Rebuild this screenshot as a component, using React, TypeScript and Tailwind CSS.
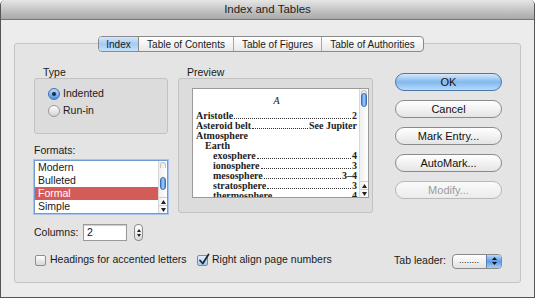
import React from "react";

const ui = "font-['Liberation_Sans',Arial,sans-serif]";

function Radio({ checked, label }: { checked?: boolean; label: string }) {
  return (
    <div className="flex items-center h-[17px]">
      <div
        className={
          checked
            ? "w-[12px] h-[12px] rounded-full border border-[#3d6fb3] bg-gradient-to-b from-[#bcd9f7] to-[#4f93e0] flex items-center justify-center"
            : "w-[12px] h-[12px] rounded-full border border-[#9a9a9a] bg-gradient-to-b from-[#ffffff] to-[#d2d2d2]"
        }
      >
        {checked && <div className="w-[4px] h-[4px] rounded-full bg-[#1b2a44]" />}
      </div>
      <span className="ml-[3px] text-[10.5px] text-[#1a1a1a]">{label}</span>
    </div>
  );
}

function Checkbox({ checked, label }: { checked?: boolean; label: string }) {
  return (
    <div className="flex items-center">
      <div
        className={
          checked
            ? "w-[11px] h-[11px] rounded-[2px] border border-[#6d8fbf] bg-gradient-to-b from-[#e4eefb] to-[#a9c8ee] relative"
            : "w-[11px] h-[11px] rounded-[2px] border border-[#8e8e8e] bg-gradient-to-b from-[#ffffff] to-[#d6d6d6]"
        }
      >
        {checked && (
          <svg className="absolute left-[0px] top-[-3px]" width="12" height="13" viewBox="0 0 12 13">
            <path d="M2 7.5 L4.8 10.5 L10.5 1.5" fill="none" stroke="#1e2a3a" strokeWidth="1.8" strokeLinecap="round" strokeLinejoin="round" />
          </svg>
        )}
      </div>
      <span className="ml-[4px] text-[10.5px] text-[#1a1a1a]">{label}</span>
    </div>
  );
}

function Button({ label, primary, disabled }: { label: string; primary?: boolean; disabled?: boolean }) {
  const base = "h-[18px] w-[107px] rounded-full border flex items-center justify-center text-[11px] leading-none";
  const cls = primary
    ? "border-[#4f76a8] bg-gradient-to-b from-[#d6e9fb] via-[#82b8ef] to-[#b5daf9] text-[#111]"
    : disabled
    ? "border-[#b9b9b9] bg-gradient-to-b from-[#fafafa] to-[#ececec] text-[#9b9b9b]"
    : "border-[#8b8b8b] bg-gradient-to-b from-[#ffffff] via-[#f2f2f2] to-[#e4e4e4] text-[#111]";
  return <div className={`${base} ${cls}`}>{label}</div>;
}

function ScrollBar({ thumbTop, thumbH }: { thumbTop: number; thumbH: number }) {
  return (
    <div className="w-[9px] h-full flex flex-col border-l border-[#d8d8d8] bg-gradient-to-r from-[#f0f0f0] to-[#ffffff]">
      <div className="relative flex-1">
        <div className="absolute left-[1px] right-[1px] top-[1px] h-[6px] rounded-t-full border border-[#c4c4c4] border-b-0 bg-[#efefef]" />
        <div
          className="absolute left-[1px] right-[1px] rounded-full border border-[#3f6fb0] bg-gradient-to-r from-[#4a8ae0] via-[#a9d0f8] to-[#4a8ae0]"
          style={{ top: thumbTop, height: thumbH }}
        />
      </div>
      <div className="h-[8px] flex items-center justify-center border-t border-[#d0d0d0]">
        <svg width="5" height="4" viewBox="0 0 5 4"><path d="M0 4 L2.5 0 L5 4 Z" fill="#222" /></svg>
      </div>
      <div className="h-[8px] flex items-center justify-center border-t border-[#d0d0d0]">
        <svg width="5" height="4" viewBox="0 0 5 4"><path d="M0 0 L2.5 4 L5 0 Z" fill="#222" /></svg>
      </div>
    </div>
  );
}

const entries: { t: string; p?: string; indent: number }[] = [
  { t: "Aristotle", p: "2", indent: 0 },
  { t: "Asteroid belt", p: "See Jupiter", indent: 0 },
  { t: "Atmosphere", indent: 0 },
  { t: "Earth", indent: 9 },
  { t: "exosphere", p: "4", indent: 17 },
  { t: "ionosphere", p: "3", indent: 17 },
  { t: "mesosphere", p: "3\u20134", indent: 17 },
  { t: "stratosphere", p: "3", indent: 17 },
  { t: "thermosphere", p: "4", indent: 17 },
];

export default function App() {
  return (
    <div className={`w-[535px] h-[298px] flex flex-col bg-[#ececec] border-x border-b border-[#555] rounded-t-[5px] overflow-hidden ${ui}`}>
      {/* title bar */}
      <div className="h-[20px] shrink-0 bg-gradient-to-b from-[#e6e6e6] to-[#a8a8a8] border-b border-[#777] flex items-center justify-center text-[11.5px] text-[#1e1e1e]">
        Index and Tables
      </div>

      <div className="flex-1 flex flex-col px-[13px]">
        {/* tabs */}
        <div className="mt-[16px] ml-[84px] relative z-10 flex h-[16px] w-[326px] rounded-[4px] border border-[#8a8a8a] overflow-hidden text-[10px] text-[#1a1a1a] bg-gradient-to-b from-[#ffffff] to-[#e8e8e8]">
          <div className="w-[40px] flex items-center justify-center border-r border-[#8a8a8a] bg-gradient-to-b from-[#d5e8fb] via-[#a3cbf3] to-[#c7e1fa]">Index</div>
          <div className="w-[95px] flex items-center justify-center border-r border-[#a8a8a8]">Table of Contents</div>
          <div className="w-[88px] flex items-center justify-center border-r border-[#a8a8a8]">Table of Figures</div>
          <div className="flex-1 flex items-center justify-center">Table of Authorities</div>
        </div>

        {/* frame */}
        <div className="-mt-[9px] h-[240px] border border-[#c4c4c4] rounded-[3px] bg-[#e4e4e4] pl-[19px] pr-[18px] pt-[22px] flex flex-col">
          <div className="flex">
            {/* left column */}
            <div className="w-[134px] flex flex-col">
              <div className="h-[12px] pl-[9px] text-[10.5px] leading-[12px] text-[#1a1a1a]">Type</div>
              <div className="h-[56px] rounded-[3px] border border-[#c2c2c2] bg-[#dcdcdc] pl-[13px] pt-[6px] flex flex-col">
                <Radio checked label="Indented" />
                <Radio label="Run-in" />
              </div>
              <div className="mt-[10px] h-[12px] text-[10.5px] leading-[12px] text-[#1a1a1a]">Formats:</div>
              <div className="mt-[4px] h-[54px] border border-[#6d9bd6] shadow-[0_0_0_1px_#a9c6ea] bg-white flex">
                <div className="flex-1 flex flex-col text-[10.5px] text-[#1a1a1a]">
                  <div className="h-[13px] leading-[13px] pl-[3px]">Modern</div>
                  <div className="h-[13px] leading-[13px] pl-[3px]">Bulleted</div>
                  <div className="h-[13px] leading-[13px] pl-[3px] bg-[#d45c58] text-white">Formal</div>
                  <div className="h-[13px] leading-[13px] pl-[3px]">Simple</div>
                </div>
                <ScrollBar thumbTop={16} thumbH={13} />
              </div>
            </div>

            {/* preview column */}
            <div className="ml-[10px] w-[195px] flex flex-col">
              <div className="h-[12px] pl-[9px] text-[10.5px] leading-[12px] text-[#1a1a1a]">Preview</div>
              <div className="h-[135px] rounded-[3px] border border-[#c2c2c2] bg-[#dcdcdc] pl-[13px] pr-[3px] pt-[9px]">
                <div className="h-[110px] border border-[#9a9a9a] bg-white flex overflow-hidden">
                  <div className="flex-1 pl-[3px] pr-[2px] pt-[7px] font-['Liberation_Serif',serif] text-[10px] leading-[10px] text-[#222] overflow-hidden">
                    <div className="text-center italic mb-[5px]">A</div>
                    {entries.map((e) => (
                      <div key={e.t} className="flex font-bold whitespace-nowrap" style={{ paddingLeft: e.indent }}>
                        <span>{e.t}</span>
                        {e.p && (
                          <>
                            <span className="flex-1 mx-[1px] mb-[2px] border-b border-dotted border-[#333]" />
                            <span>{e.p}</span>
                          </>
                        )}
                      </div>
                    ))}
                  </div>
                  <ScrollBar thumbTop={4} thumbH={14} />
                </div>
              </div>
            </div>

            {/* buttons */}
            <div className="ml-[22px] pt-[7px] flex flex-col gap-[9px]">
              <Button primary label="OK" />
              <Button label="Cancel" />
              <Button label="Mark Entry..." />
              <Button label="AutoMark..." />
              <Button disabled label="Modify..." />
            </div>
          </div>

          {/* columns row */}
          <div className="mt-[10px] flex items-center h-[17px]">
            <span className="text-[10.5px] text-[#1a1a1a] w-[49px]">Columns:</span>
            <div className="w-[44px] h-[17px] border border-[#9a9a9a] bg-white text-[10.5px] leading-[15px] pl-[3px] text-[#111] shadow-[inset_0_1px_1px_#ccc]">2</div>
            <div className="ml-[7px] w-[9px] h-[17px] rounded-[4px] border border-[#8a8a8a] bg-gradient-to-b from-[#ffffff] to-[#dcdcdc] flex flex-col items-center justify-center gap-[2px]">
              <svg width="4" height="3" viewBox="0 0 4 3"><path d="M0 3 L2 0 L4 3 Z" fill="#222" /></svg>
              <svg width="4" height="3" viewBox="0 0 4 3"><path d="M0 0 L2 3 L4 0 Z" fill="#222" /></svg>
            </div>
          </div>

          {/* bottom row */}
          <div className="mt-[11px] flex items-center h-[16px]">
            <div className="w-[162px] ml-[1px]">
              <Checkbox label="Headings for accented letters" />
            </div>
            <Checkbox checked label="Right align page numbers" />
            <span className="ml-auto text-[10.5px] text-[#1a1a1a] mr-[6px] mt-[2px]">Tab leader:</span>
            <div className="w-[50px] h-[15px] rounded-[4px] border border-[#8a8a8a] bg-gradient-to-b from-[#ffffff] to-[#e2e2e2] flex overflow-hidden mt-[2px]">
              <div className="flex-1 text-[9px] leading-[11px] pl-[6px] text-[#222]">........</div>
              <div className="w-[15px] border-l border-[#5a7fb5] bg-gradient-to-b from-[#b9d8f8] via-[#5b9be6] to-[#a6cdf6] flex flex-col items-center justify-center gap-[2px]">
                <svg width="5" height="3" viewBox="0 0 5 3"><path d="M0 3 L2.5 0 L5 3 Z" fill="#111" /></svg>
                <svg width="5" height="3" viewBox="0 0 5 3"><path d="M0 0 L2.5 3 L5 0 Z" fill="#111" /></svg>
              </div>
            </div>
          </div>
        </div>
      </div>
    </div>
  );
}
